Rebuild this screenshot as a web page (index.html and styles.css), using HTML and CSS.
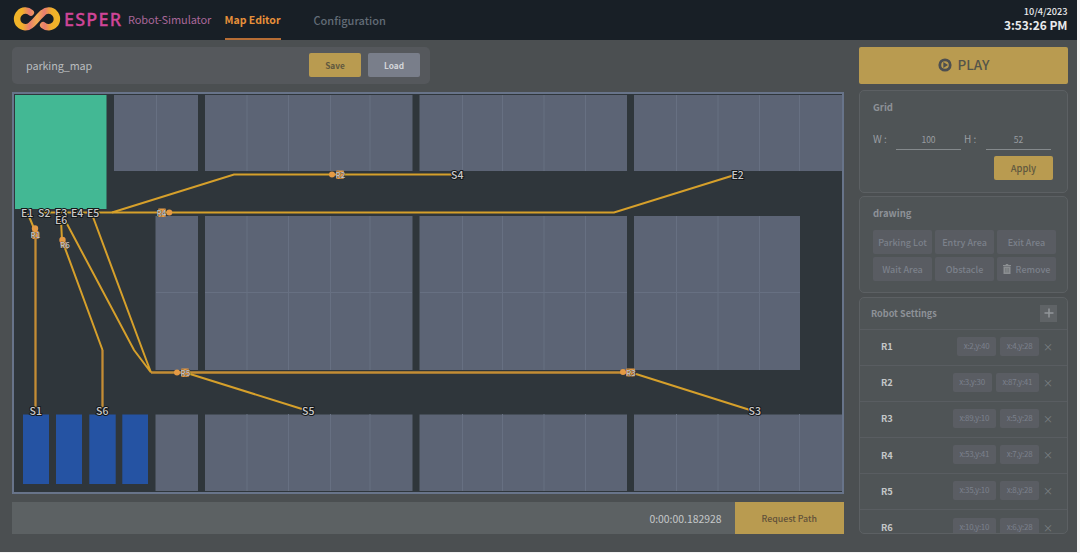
FILE: index.html
```html
<!DOCTYPE html>
<html lang="en">
<head>
<meta charset="utf-8">
<title>ESPER Robot-Simulator</title>
<link rel="stylesheet" href="styles.css">
</head>
<body>
<div class="app">
  <header class="topbar">
    <svg class="logo" viewBox="0 0 48 26" width="48" height="26">
      <defs>
        <linearGradient id="ribbon" gradientUnits="userSpaceOnUse" x1="5" y1="0" x2="43" y2="0">
          <stop offset="0" stop-color="#f0b429"/><stop offset=".12" stop-color="#f0ae2c"/><stop offset=".3" stop-color="#e87c70"/>
          <stop offset=".5" stop-color="#f3ae50"/><stop offset=".7" stop-color="#e87c70"/><stop offset=".88" stop-color="#f0ae2c"/><stop offset="1" stop-color="#f0b429"/>
        </linearGradient>
      </defs>
      <path d="M17.800 6.600A8.300 8.300 0 1 0 17.800 19.200C22 16 26 10 30.200 6.600A8.300 8.300 0 1 1 30.200 19.200" fill="none" stroke="url(#ribbon)" stroke-width="6.500" stroke-linecap="round"/>
    </svg>
    <span class="brand">ESPER</span>
    <span class="product">Robot-Simulator</span>
    <nav class="tabs">
      <a class="tab tab-active">Map Editor</a>
      <a class="tab">Configuration</a>
    </nav>
    <div class="clock"><span class="date">10/4/2023</span><span class="time">3:53:26 PM</span></div>
  </header>
  <div class="content">
    <main class="editor">
      <div class="filebar">
        <span class="filename">parking_map</span>
        <button class="btn gold">Save</button>
        <button class="btn gray">Load</button>
      </div>
      <svg class="map" viewBox="14 94 828 398" width="828" height="398">
        <g class="lots">
          <path d="M114 95H198V171H114ZM205 95H412.500V171H205ZM419.500 95H627V171H419.500ZM634 95H842V171H634Z"/>
          <path d="M155.500 216H198V370H155.500ZM205 216H412.500V370H205ZM419.500 216H627V370H419.500ZM634 216H800V370H634Z"/>
          <path d="M155.500 414.500H198V491H155.500ZM205 414.500H412.500V491H205ZM419.500 414.500H627V491H419.500ZM634 414.500H842V491H634Z"/>
        </g>
        <g class="dividers">
          <path d="M156.500 95V171M247 95V171M288.500 95V171M330.500 95V171M370 95V171M462.500 95V171M502.500 95V171M544 95V171M585.500 95V171M676.500 95V171M718 95V171M759.500 95V171M799.500 95V171"/>
          <path d="M247 216V370M288.500 216V370M330.500 216V370M370 216V370M462.500 216V370M502.500 216V370M544 216V370M585.500 216V370M676.500 216V370M718 216V370M759.500 216V370"/>
          <path d="M247 414V491M288.500 414V491M330.500 414V491M370 414V491M462.500 414V491M502.500 414V491M544 414V491M585.500 414V491M676.500 414V491M718 414V491M759.500 414V491M799.500 414V491"/>
          <path d="M156 292.500H198M205 292.500H412M420 292.500H627M634 292.500H800"/>
        </g>
        <path class="entry" d="M15 95H106.500V209H15Z"/>
        <path class="wait" d="M23 414.500H49V484H23ZM56 414.500H82V484H56ZM89.300 414.500H115.700V484H89.300ZM122.300 414.500H148V484H122.300Z"/>
        <g class="routes">
          <path d="M40 212.500H614L733 175.500"/>
          <path d="M112 212.500L234 174.500H452"/>
          <path class="dim" d="M35.500 232V408M102.500 350V408M151 372.500H630"/>
          <path d="M28 214L35.500 232M61 220L62 240L102.500 350M66 222L134 350L151 372.500M93 217L147 362L151 372.500"/>
          <path d="M190 374L302 409M636 374L750 410"/>
        </g>
        <g class="robots">
          <circle cx="332" cy="174.500" r="3"/><rect x="336" y="170.500" width="8" height="8.500" rx="1"/>
          <circle cx="169.300" cy="212.500" r="3"/><rect x="158" y="208.500" width="8" height="8.500" rx="1"/>
          <circle cx="177" cy="372.500" r="3"/><rect x="181" y="368.500" width="8" height="8.500" rx="1"/>
          <circle cx="623" cy="372" r="3"/><rect x="626" y="368.500" width="9" height="8" rx="1"/>
          <circle cx="35" cy="228.500" r="3.200"/><rect x="31.500" y="231" width="8" height="8" rx="2"/>
          <circle cx="62.500" cy="240" r="3.200"/><path d="M60 242L67 242L68 249L61 247Z"/>
        </g>
        <g class="tags small">
          <text x="335.500" y="177.500">R2</text><text x="156.500" y="215.500">R4</text>
          <text x="180.500" y="375.500">R5</text><text x="626" y="375.500">R3</text>
          <text x="30.500" y="237.500">R1</text><text x="60" y="247.500">R6</text>
        </g>
        <g class="tags">
          <text x="21" y="216.500">E1</text><text x="38" y="216.500">S2</text>
          <text x="55" y="216.500">E3</text><text x="71" y="216.500">E4</text>
          <text x="87" y="216.500">E5</text><text x="55" y="224">E6</text>
          <text x="451" y="178.500">S4</text><text x="731.500" y="178.500">E2</text>
          <text x="29.500" y="414.500">S1</text><text x="96" y="414.500">S6</text>
          <text x="302" y="414.500">S5</text><text x="748.500" y="414.500">S3</text>
        </g>
      </svg>
      <div class="statusbar">
        <span class="elapsed">0:00:00.182928</span>
        <button class="request">Request Path</button>
      </div>
    </main>
    <aside class="side">
      <button class="play">
        <svg viewBox="0 0 14 14" width="14" height="14"><circle cx="7" cy="7" r="5.200" fill="none" stroke="#4d4f50" stroke-width="2.800"/><path d="M5.300 4L10 7L5.300 10Z" fill="#4d4f50"/></svg>
        <span>PLAY</span>
      </button>
      <section class="card grid-card">
        <h2>Grid</h2>
        <div class="fields">
          <label>W :</label><span class="input">100</span><label>H :</label><span class="input">52</span>
        </div>
        <button class="btn gold apply">Apply</button>
      </section>
      <section class="card drawing-card">
        <h2>drawing</h2>
        <div class="tools">
          <button>Parking Lot</button><button>Entry Area</button><button>Exit Area</button>
          <button>Wait Area</button><button>Obstacle</button>
          <button><svg viewBox="0 0 8 10" width="8" height="10"><path d="M0 1H2.500L3 0H5L5.500 1H8V2H0ZM.5 2.500H7.500V10H.5Z" fill="#8b8e91"/><path d="M2.600 4V8.500M4 4V8.500M5.400 4V8.500" stroke="#5c5f63" stroke-width=".4"/></svg>Remove</button>
        </div>
      </section>
      <section class="card robot-card">
        <div class="robot-head"><h2>Robot Settings</h2><button class="add"><svg viewBox="0 0 10 10" width="10" height="10"><path d="M5 .5V9.500M.5 5H9.500" stroke="#92969a" stroke-width="1.500"/></svg></button></div>
        <div class="row"><b>R1</b><span class="chip">x:2,y:40</span><span class="chip">x:4,y:28</span><i>×</i></div>
        <div class="row"><b>R2</b><span class="chip">x:3,y:30</span><span class="chip wide">x:87,y:41</span><i>×</i></div>
        <div class="row"><b>R3</b><span class="chip wide">x:89,y:10</span><span class="chip">x:5,y:28</span><i>×</i></div>
        <div class="row"><b>R4</b><span class="chip wide">x:53,y:41</span><span class="chip">x:7,y:28</span><i>×</i></div>
        <div class="row"><b>R5</b><span class="chip wide">x:35,y:10</span><span class="chip">x:8,y:28</span><i>×</i></div>
        <div class="row"><b>R6</b><span class="chip wide">x:10,y:10</span><span class="chip">x:6,y:28</span><i>×</i></div>
      </section>
    </aside>
  </div>
</div>
</body>
</html>
```
FILE: styles.css
```css
* { box-sizing: border-box; }
body { margin: 0; background: #f4f4f4; overflow: hidden; font-family: "Noto Sans CJK SC", "Noto Sans", sans-serif; }
button { border: 0; padding: 0; margin: 0; font-family: inherit; }
h2 { margin: 0; font-size: 9.500px; line-height: 14px; font-weight: 700; color: #8d9197; }
.app { width: 1076.500px; height: 551.500px; background: #4b4f51; }
.topbar { display: flex; height: 40px; background: #181f26; padding-left: 13px; padding-right: 9px; }
.logo { margin-top: 6px; flex: none; }
.brand { font-family: "Noto Sans", sans-serif; font-weight: 500; font-size: 18px; line-height: 38px; width: 61px; margin-left: 3px; color: #cf4597; letter-spacing: 1.200px; -webkit-text-stroke: .3px #cf4597; }
.product { font-size: 11px; line-height: 39px; color: #a96799; width: 96.500px; margin-left: 3px; white-space: nowrap; letter-spacing: -.1px; }
.tabs { display: flex; gap: 33px; font-size: 10.500px; font-weight: 700; line-height: 40px; }
.tab { color: #626c77; white-space: nowrap; }
.tab + .tab { font-weight: 500; font-size: 11px; }
.tab-active { color: #e7903a; border-bottom: 2px solid #b66d35; width: 56px; }
.clock { margin-left: auto; display: flex; flex-direction: column; align-items: flex-end; color: #e8eaec; padding-top: 5px; }
.date { font-size: 9.200px; line-height: 13px; font-weight: 500; }
.time { font-size: 11.900px; line-height: 14px; font-weight: 700; }
.content { display: flex; padding: 7px 8.500px 0 12px; justify-content: space-between; }
.editor { width: 832px; }
.filebar { display: flex; align-items: center; width: 418px; height: 36.500px; padding: 0 10px 0 14px; border-radius: 5px; background: #55585c; }
.filename { flex: 1; color: #b9bcbf; font-size: 10.800px; line-height: 16px; letter-spacing: -.1px; }
.btn { border-radius: 2px; height: 24px; width: 52px; font-size: 8.300px; font-weight: 700; }
.gold { background: #b99b50; color: #60583f; }
.gray { background: #797e8a; color: #d3d5d9; margin-left: 7px; }
.map { display: block; box-sizing: content-box; margin-top: 8.500px; border: 2px solid #68748a; background: #2f363b; }
.lots { fill: #5c6475; }
.dividers { stroke: #677082; stroke-width: 1; fill: none; }
.entry { fill: #43b894; }
.wait { fill: #2553a3; }
.routes { fill: none; stroke: #d6a02b; stroke-width: 2; }
.routes .dim { stroke: #c48d35; stroke-width: 2.300; }
.robots { fill: #e59a44; }
.tags { font-size: 10.500px; font-weight: 500; fill: #c9c9c9; stroke: #16191b; stroke-width: 2px; paint-order: stroke; }
.small { font-size: 8px; stroke-width: .5px; }
.statusbar { display: flex; justify-content: flex-end; align-items: center; height: 32px; margin-top: 8px; background: #5c6163; }
.elapsed { color: #c5c8c9; font-size: 10.400px; margin-right: 13px; }
.request { width: 109.500px; height: 32px; background: #b99b50; color: #61513a; font-size: 8.800px; font-weight: 500; }
.side { width: 209px; display: flex; flex-direction: column; }
.play { height: 36.500px; background: #b99b50; border-radius: 2px; color: #54544a; font-size: 13.500px; font-weight: 500; display: flex; justify-content: center; align-items: center; gap: 6px; }
.play span { position: relative; top: -1px; }
.card { border: 1px solid #5c6063; border-radius: 5px; background: #4f5456; padding: 9px 13px; }
.grid-card { margin-top: 6.500px; height: 103px; padding-right: 14px; }
.fields { display: grid; grid-template-columns: 23px 65px 25px 65px; height: 16px; margin-top: 16px; color: #999da1; font-size: 10px; line-height: 17px; }
.fields label:nth-of-type(2) { padding-left: 3px; }
.input { border-bottom: 1px solid #84898c; text-align: center; font-size: 8.500px; line-height: 19px; }
.apply { display: block; margin: 10px 0 0 auto; width: 59px; font-size: 9.300px; font-weight: 500; }
.drawing-card { margin-top: 3px; height: 97px; }
.tools { display: grid; grid-template-columns: repeat(3, 59px); gap: 3px; margin-top: 10px; }
.tools button { height: 24px; border-radius: 2px; background: #595c62; color: #7c818b; font-size: 9px; font-weight: 500; display: flex; align-items: center; justify-content: center; gap: 5px; white-space: nowrap; }
.robot-card { margin-top: 3.500px; height: 237.500px; padding: 0; overflow: hidden; }
.robot-head { display: flex; height: 31px; align-items: center; justify-content: space-between; padding: 0 10px 0 11px; }
.robot-head h2 { font-size: 9.100px; }
.add { width: 17px; height: 17px; background: #5f6366; display: flex; align-items: center; justify-content: center; }
.row { display: flex; align-items: center; height: 36.200px; border-top: 1px solid #595d61; padding: 0 15px 2px 21px; gap: 4px; }
.row b { flex: 1; font-size: 9.300px; color: #c4c7c8; font-weight: 700; }
.chip { width: 39px; height: 19px; line-height: 18px; border-radius: 2px; background: #5a5d63; color: #7b808c; font-size: 8px; text-align: center; white-space: nowrap; letter-spacing: -.3px; }
.chip.wide { width: 43.500px; }
.row i { width: 9px; text-align: center; font-style: normal; font-size: 10px; color: #7b8083; }
```
